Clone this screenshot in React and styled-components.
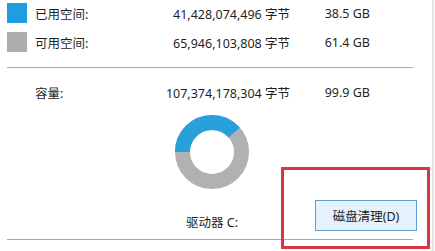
import React from 'react';
import styled, { createGlobalStyle } from 'styled-components';

const GlobalStyle = createGlobalStyle`
  body {
    margin: 0;
    background: #ffffff;
    font-family: "Noto Sans", "Noto Sans CJK SC", sans-serif;
    color: #1f1f1f;
  }
`

const Page = styled.div`
  position: relative;
  width: 435px;
  height: 251px;
  display: flex;
  overflow: hidden;
  background: #fff;
`

const Panel = styled.div`
  width: 413px;
  padding: 3px 0 0 7px;
  display: flex;
  flex-direction: column;
`

const EdgeLine = styled.div`
  margin-left: 12px;
  width: 2px;
  background: #e3e3e3;
`

// swatch | label | bytes | GB
const Legend = styled.div`
  display: grid;
  grid-template-columns: 20px 100px 163px 80px;
  grid-auto-rows: 20px;
  row-gap: 9px;
  align-items: center;
  font-size: 12.5px;
  margin-top: ${props => props.top || 0}px;
`

const Swatch = styled.div`
  width: 20px;
  height: 20px;
  background: ${props => props.color};
`

const Label = styled.div`
  padding-left: 8px;
`

const Num = styled.div`
  text-align: right;
  white-space: nowrap;
`

const Divider = styled.div`
  height: 1px;
  background: #a9a9a9;
  margin-top: ${props => props.top}px;
  width: 406px;
`

const DriveArea = styled.div`
  display: grid;
  grid-template-columns: 1fr auto 1fr;
  width: 410px;
  margin-top: 13px;
`

const DonutCol = styled.div`
  grid-column: 2;
  display: flex;
  flex-direction: column;
  align-items: center;
`

const DriveName = styled.div`
  margin-top: 25px;
  font-size: 12.5px;
  line-height: 17px;
`

const CleanButton = styled.button`
  grid-column: 3;
  justify-self: end;
  align-self: end;
  width: 102px;
  height: 31px;
  background: #e5f1fb;
  border: 1px solid #5a9fd6;
  font-family: inherit;
  font-size: 12.5px;
  color: #1f1f1f;
  padding: 0;
`

// red annotation box drawn over the screenshot
const Highlight = styled.div`
  position: absolute;
  left: 281px;
  top: 167px;
  width: 143px;
  height: 76px;
  border: 3px solid #d8363e;
  pointer-events: none;
`

function Donut({ used }) {
  const r = 29.5
  const c = 2 * Math.PI * r
  return (
    <svg width="74" height="74" viewBox="0 0 74 74">
      <circle cx="37" cy="37" r={r} fill="none" stroke="#b1b1b1" strokeWidth="15" />
      <circle
        cx="37"
        cy="37"
        r={r}
        fill="none"
        stroke="#27a0dc"
        strokeWidth="15"
        strokeDasharray={`${c * used} ${c}`}
        transform="rotate(180 37 37)"
      />
    </svg>
  )
}

export default function App() {
  return (
    <>
      <GlobalStyle />
      <Page>
        <Panel>
          <Legend>
            <Swatch color="#1e9de0" />
            <Label>已用空间:</Label>
            <Num>41,428,074,496 字节</Num>
            <Num>38.5 GB</Num>
            <Swatch color="#adadad" />
            <Label>可用空间:</Label>
            <Num>65,946,103,808 字节</Num>
            <Num>61.4 GB</Num>
          </Legend>
          <Divider top={15} />
          <Legend top={14}>
            <div />
            <Label>容量:</Label>
            <Num>107,374,178,304 字节</Num>
            <Num>99.9 GB</Num>
          </Legend>
          <DriveArea>
            <DonutCol>
              <Donut used={0.385} />
              <DriveName>驱动器 C:</DriveName>
            </DonutCol>
            <CleanButton>磁盘清理(D)</CleanButton>
          </DriveArea>
          <Divider top={8} />
        </Panel>
        <EdgeLine />
        <Highlight />
      </Page>
    </>
  )
}
